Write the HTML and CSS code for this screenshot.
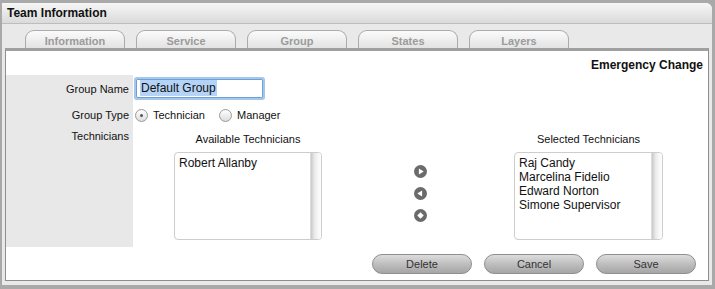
FILE: index.html
```html
<!DOCTYPE html>
<html>
<head>
<meta charset="utf-8">
<link rel="stylesheet" href="styles.css">
</head>
<body>
<div class="window">
  <div class="titlebar">Team Information</div>
  <div class="tabs">
    <div class="tab">Information</div>
    <div class="tab">Service</div>
    <div class="tab">Group</div>
    <div class="tab">States</div>
    <div class="tab">Layers</div>
  </div>
  <div class="panel">
    <div class="panel-title">Emergency Change</div>
    <div class="form">
      <div class="label r1">Group Name</div>
      <div class="field r1"><div class="textbox"><span class="sel">Default Group</span></div></div>
      <div class="label r2">Group Type</div>
      <div class="field r2">
        <span class="radio checked"></span><span class="radio-text">Technician</span>
        <span class="radio second"></span><span class="radio-text">Manager</span>
      </div>
      <div class="label r3">Technicians</div>
      <div class="field r3">
        <div class="techs">
          <div class="tech-col">
            <div class="tech-head">Available Technicians</div>
            <div class="listbox">
              <div class="items"><div>Robert Allanby</div></div>
              <div class="scroll"></div>
            </div>
          </div>
          <div class="arrows">
            <svg width="13" height="13" viewBox="0 0 12 12"><circle cx="6" cy="6" r="6" fill="#6b6b6b"/><polygon points="4.5,3.2 9,6 4.5,8.8" fill="#fff"/></svg>
            <svg width="13" height="13" viewBox="0 0 12 12"><circle cx="6" cy="6" r="6" fill="#6b6b6b"/><polygon points="7.5,3.2 3,6 7.5,8.8" fill="#fff"/></svg>
            <svg width="13" height="13" viewBox="0 0 12 12"><circle cx="6" cy="6" r="6" fill="#6b6b6b"/><polygon points="6,3 9,6 6,9 3,6" fill="#fff"/></svg>
          </div>
          <div class="tech-col right">
            <div class="tech-head">Selected Technicians</div>
            <div class="listbox">
              <div class="items">
                <div>Raj Candy</div>
                <div>Marcelina Fidelio</div>
                <div>Edward Norton</div>
                <div>Simone Supervisor</div>
              </div>
              <div class="scroll"></div>
            </div>
          </div>
        </div>
      </div>
    </div>
    <div class="actions">
      <div class="btn">Delete</div>
      <div class="btn">Cancel</div>
      <div class="btn">Save</div>
    </div>
  </div>
</div>
</body>
</html>
```
FILE: styles.css
```css
html, body {
  margin: 0;
  padding: 0;
}
body {
  background: #a9a9a9;
  font-family: "Liberation Sans", Arial, sans-serif;
  width: 715px;
  height: 289px;
  overflow: hidden;
}
.window {
  margin: 3px 3px 0 2px;
  width: 710px;
  height: 282px;
  background: #e9e9e9;
  border-top-right-radius: 6px;
  box-sizing: border-box;
  padding-bottom: 4px;
  display: flex;
  flex-direction: column;
}
.titlebar {
  height: 20px;
  line-height: 21px;
  padding-left: 5px;
  font-weight: bold;
  font-size: 12px;
  color: #111;
  background: linear-gradient(#f6f6f6, #dadada);
  border-bottom: 1px solid #bdbdbd;
  border-top-right-radius: 6px;
}
.tabs {
  display: flex;
  gap: 11px;
  padding: 6px 0 0 23px;
  height: 18px;
}
.tab {
  width: 98px;
  height: 17px;
  border: 1px solid #ababab;
  border-bottom: none;
  border-radius: 9px 9px 0 0;
  background: linear-gradient(#fbfbfb, #e3e3e3);
  color: #9b9b9b;
  font-weight: bold;
  font-size: 11px;
  line-height: 20px;
  text-align: center;
}
.panel {
  flex: 1;
  margin: 0 3px;
  background: #fff;
  border: 1px solid #8e8e8e;
  border-top: 3px solid #a0a0a0;
  padding: 7px 0 6px 0;
  display: flex;
  flex-direction: column;
}
.panel-title {
  text-align: right;
  font-weight: bold;
  font-size: 12px;
  line-height: 14px;
  padding-right: 5px;
  margin-bottom: 3px;
  color: #111;
}
.form {
  display: grid;
  grid-template-columns: 127px 1fr;
}
.label {
  background: #e8e8e8;
  font-size: 11px;
  color: #111;
  text-align: right;
  padding-right: 4px;
  display: flex;
  justify-content: flex-end;
  align-items: center;
}
.r1 { height: 28px; }
.r2 { height: 24px; }
.label.r3 {
  align-items: flex-start;
  padding-top: 2px;
  line-height: 14px;
}
.field {
  display: flex;
  align-items: center;
  font-size: 11px;
  color: #111;
}
.textbox {
  margin-left: 3px;
  margin-top: -1px;
  width: 120px;
  height: 17px;
  border: 1px solid #6f9fd6;
  box-shadow: 0 0 0 2px #a6c7ec;
  border-radius: 1px;
  font-size: 12px;
  line-height: 17px;
  padding-left: 3px;
  padding-right: 2px;
}
.sel {
  background: #b4d3f6;
  padding: 1px 1px 1px 1px;
}
.radio {
  width: 11px;
  height: 11px;
  border: 1px solid #9a9a9a;
  border-radius: 50%;
  background: linear-gradient(#ffffff, #dcdcdc);
  margin-left: 2px;
  position: relative;
  box-sizing: content-box;
}
.radio.checked::after {
  content: "";
  position: absolute;
  left: 4px;
  top: 4px;
  width: 3px;
  height: 3px;
  border-radius: 50%;
  background: #555;
}
.radio.second {
  margin-left: 14px;
}
.radio-text {
  margin-left: 5px;
}
.r3.field {
  align-items: flex-start;
  padding-top: 5px;
  padding-bottom: 7px;
}
.techs {
  display: flex;
  padding-left: 41px;
}
.tech-col {
  width: 148px;
  display: flex;
  flex-direction: column;
}
.tech-col.right { width: 149px; }
.tech-head {
  text-align: center;
  font-size: 11px;
  line-height: 14px;
  margin-bottom: 6px;
  white-space: nowrap;
}
.listbox {
  height: 86px;
  border: 1px solid #cdcdcd;
  border-radius: 4px;
  display: flex;
  overflow: hidden;
}
.items {
  flex: 1;
  padding: 3px 0 0 4px;
  font-size: 12px;
  line-height: 14px;
  color: #111;
}
.scroll {
  width: 10px;
  background: linear-gradient(to right, #c9c9c9, #e9e9e9 35%, #f7f7f7 70%, #fdfdfd);
  border-left: 1px solid #dcdcdc;
}
.arrows {
  width: 192px;
  display: flex;
  flex-direction: column;
  align-items: center;
  padding-top: 33px;
  padding-left: 4px;
  box-sizing: border-box;
  gap: 9px;
}
.arrows svg { display: block; }
.actions {
  display: flex;
  justify-content: flex-end;
  gap: 12px;
  margin-top: 7px;
  padding-right: 12px;
}
.btn {
  width: 98px;
  height: 18px;
  border: 1px solid #8f8f8f;
  border-radius: 10px;
  background: linear-gradient(#dcdcdc, #b9b9b9 60%, #a6a6a6);
  color: #333;
  font-size: 11px;
  line-height: 19px;
  text-align: center;
}
```
